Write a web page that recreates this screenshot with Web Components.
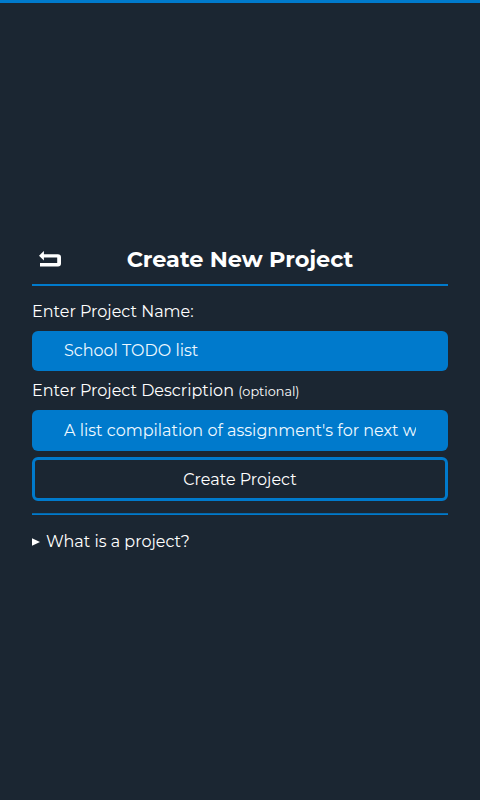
<!DOCTYPE html>
<html lang="en"><head><meta charset="utf-8"><title>Create New Project</title>
<style>
html,body{margin:0;height:100%;background:#1b2632}
body{color:#fff;font:400 16px/20px Montserrat,Inter,sans-serif;overflow:hidden}
</style></head><body>
<project-page>
<page-header slot="header">Create New Project</page-header>
<form-field value="School TODO list">Enter Project Name:</form-field>
<form-field style="--value-line:41px" value="A list compilation of assignment's for next w" note="(optional)">Enter Project Description</form-field>
<outline-button>Create Project</outline-button>
<help-disclosure>What is a project?</help-disclosure>
</project-page>
<script>
const define=(name,html,setup)=>customElements.define(name,class extends HTMLElement{
 connectedCallback(){if(this.shadowRoot)return;const t=document.createElement('template');t.innerHTML=html;
  this.attachShadow({mode:'open'}).append(t.content.cloneNode(true));if(setup)setup(this,this.shadowRoot);}
});
define('page-header',`<style>
:host{display:grid;grid-template-columns:36px 1fr 36px;align-items:center;height:50px;box-sizing:border-box;border-bottom:2px solid #007acc;padding-bottom:2px}
h1{margin:0;font-size:22.4px;line-height:28px;font-weight:700;text-align:center;white-space:nowrap}
svg{display:block;margin-left:7px}
</style><svg width="22" height="16" viewBox="0 0 22 16"><path d="M0 4.8 4.9 0V3.2H19Q22 3.2 22 6.2V12.4Q22 15.4 19 15.4H1V11.9H18.2V6.6H4.9V9.5Z" fill="#fff"/></svg><h1><slot></slot></h1><span></span>`);
define('form-field',`<style>
:host{display:block;height:79.5px}
label{display:block;height:29px;line-height:20px;white-space:nowrap}
small{font-size:12.8px}
div{box-sizing:border-box;height:40.5px;padding:0 32px;border-radius:6px;background:#007acc;line-height:var(--value-line,40px);white-space:nowrap}
span{display:block;overflow:hidden;color:#eef8ff}
</style><label><slot></slot> <small></small></label><div><span></span></div>`,(h,r)=>{
 r.querySelector('span').textContent=h.getAttribute('value');
 r.querySelector('small').textContent=h.getAttribute('note')||'';
});
define('outline-button',`<style>
:host{display:block;margin-top:-3.5px}
button{display:block;width:100%;height:43.5px;margin:0;padding:1.5px 0 0;box-sizing:border-box;border:3px solid #007acc;border-radius:6px;background:none;color:inherit;font:inherit}
</style><button><slot></slot></button>`);
define('help-disclosure',`<style>
:host{display:flex;align-items:center;gap:6px;margin-top:12.5px;padding-top:18.5px;background:linear-gradient(#0667a9 1px,#007acc 1px) top/100% 2px no-repeat}
svg{display:block;margin-top:1px}
</style><svg width="8" height="8" viewBox="0 0 8 8"><path d="M0 .3 8 4 0 7.7Z" fill="#fff"/></svg><slot></slot>`);
define('project-page',`<style>
:host{display:block;height:100%;box-sizing:border-box;border-top:3px solid #007acc;padding:233px 32px 0}
main{padding-top:15.5px}
</style><slot name="header"></slot><main><slot></slot></main>`);
</script></body></html>
